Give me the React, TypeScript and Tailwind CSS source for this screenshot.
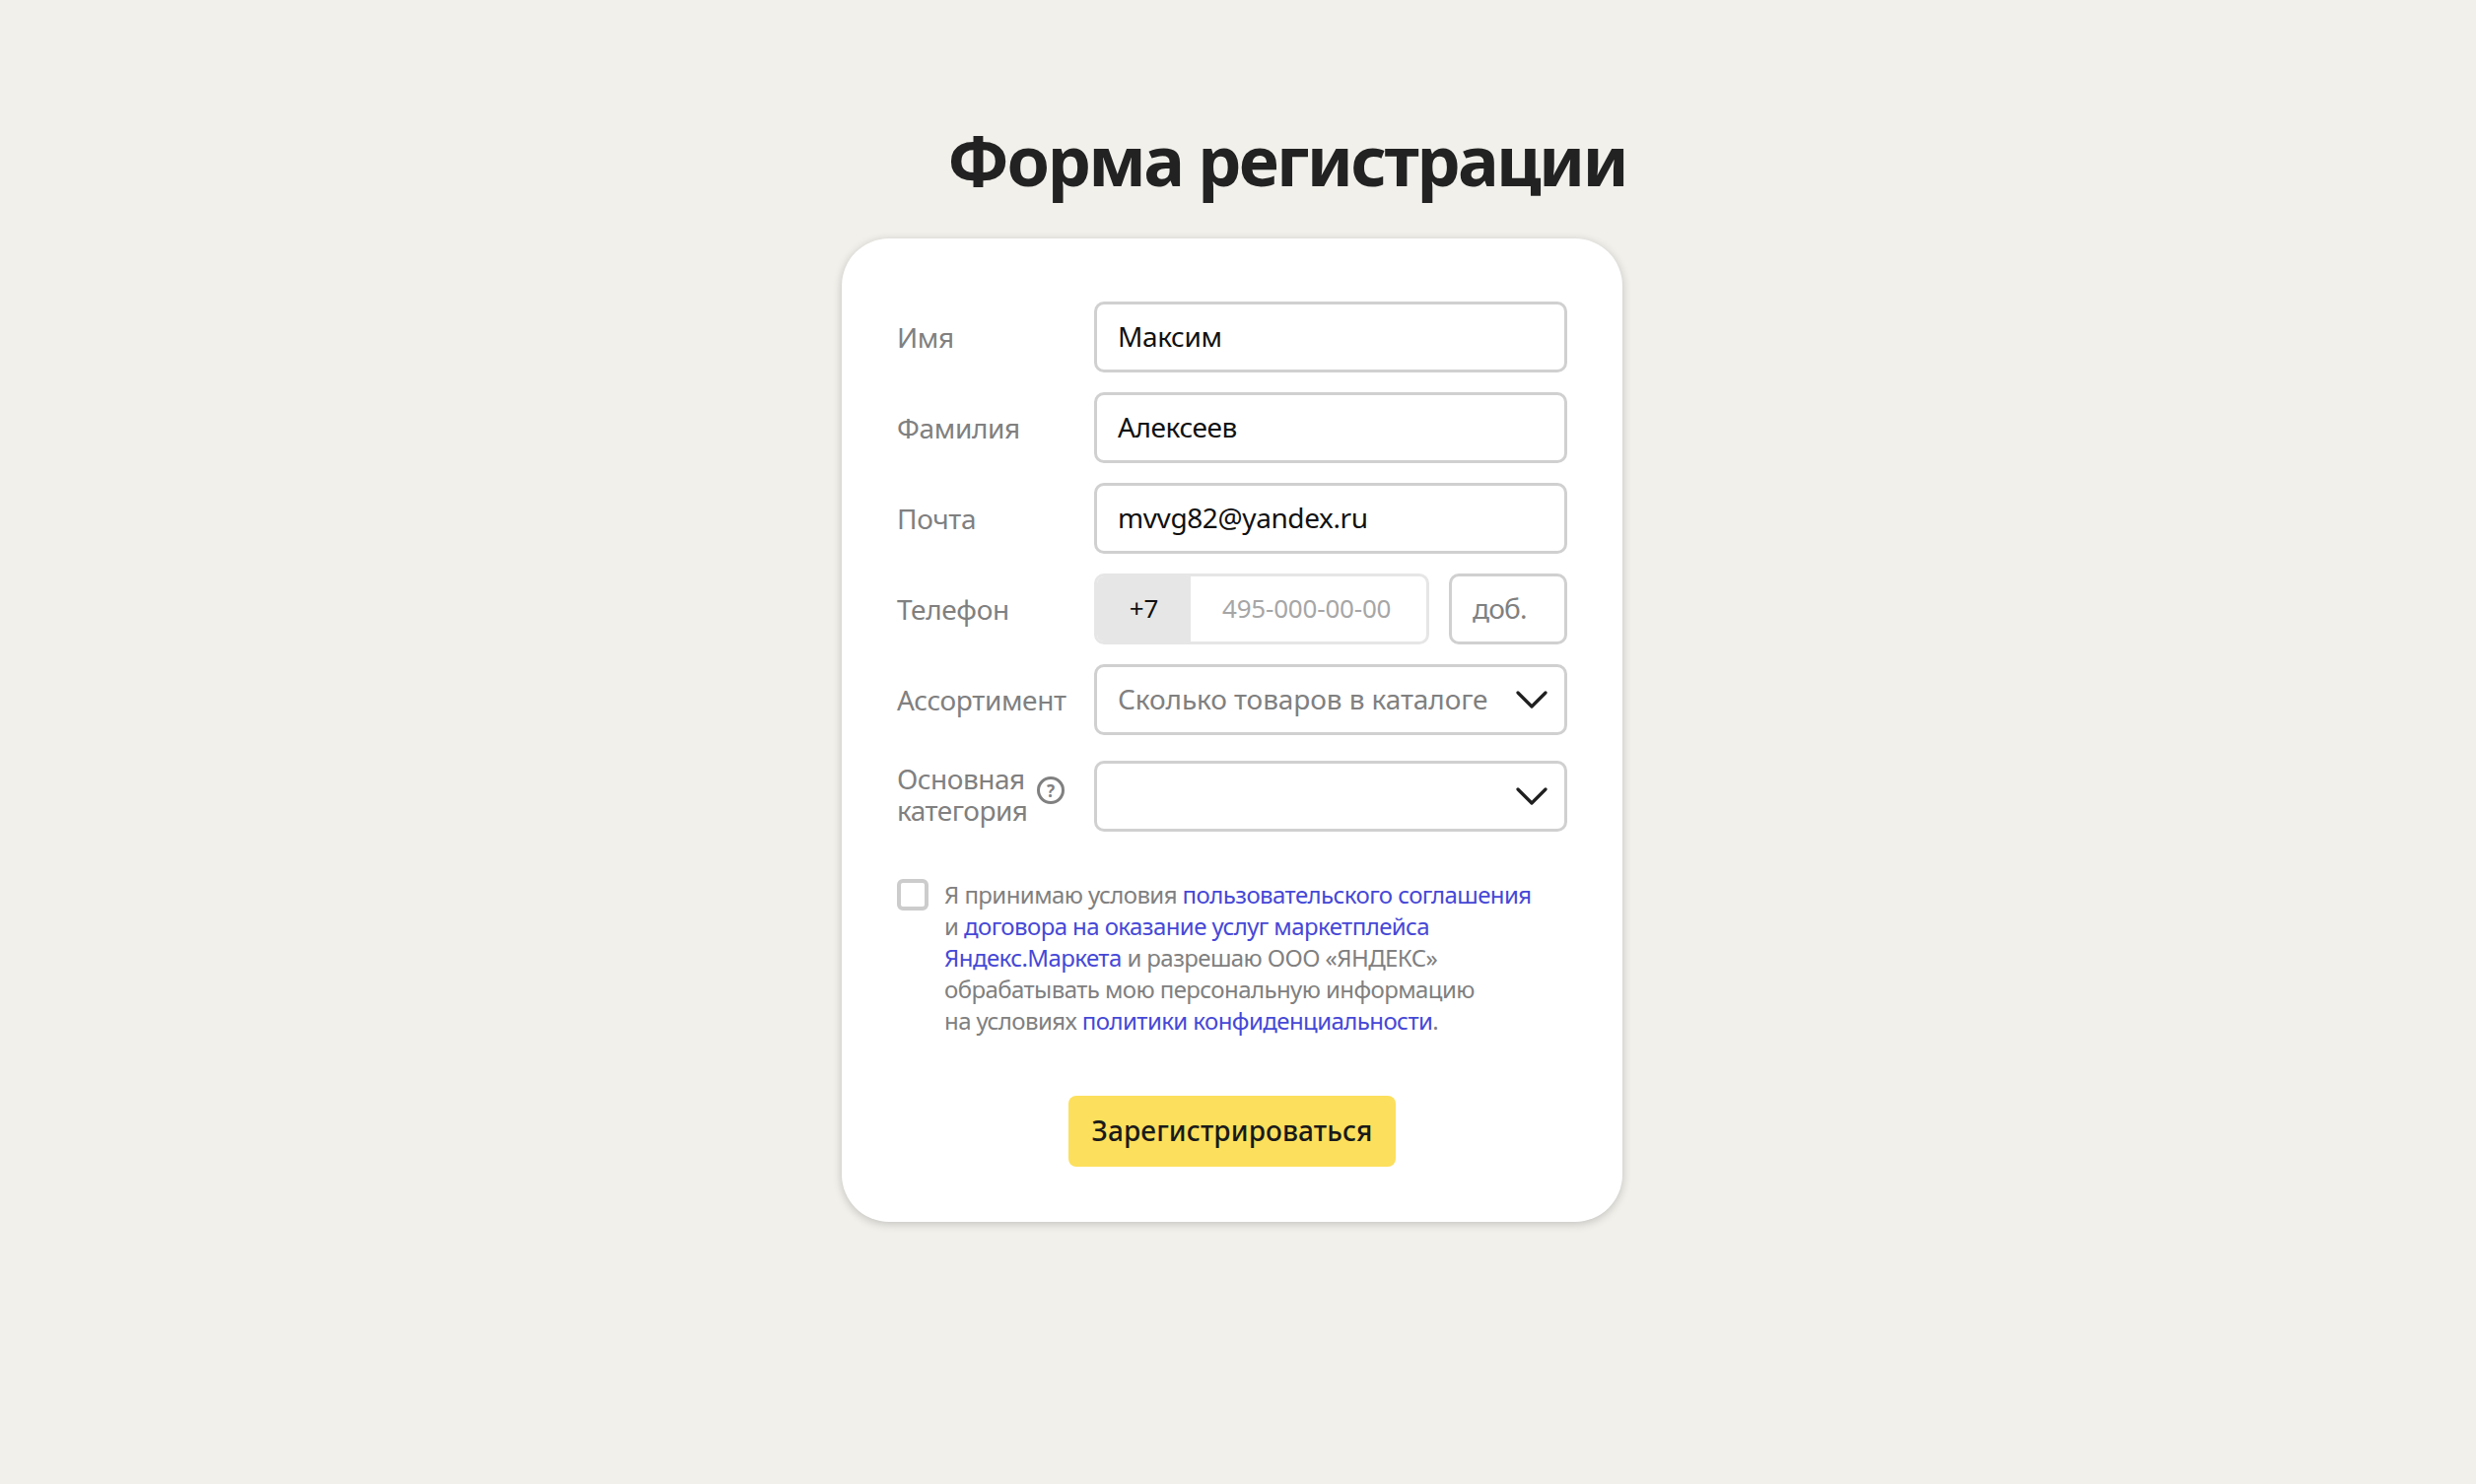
const sans = "font-['Noto_Sans','Liberation_Sans',sans-serif]";

function Label({ children }: { children: React.ReactNode }) {
  return <div className="w-[200px] shrink-0 text-[28px] leading-[32px] tracking-[-0.35px] text-[#808080]">{children}</div>;
}

function Chevron() {
  return (
    <svg width="32" height="18" viewBox="0 0 32 18" fill="none" className="shrink-0">
      <path d="M2 2 L16 16 L30 2" stroke="#1f1f1f" strokeWidth="3.2" strokeLinecap="round" strokeLinejoin="round" />
    </svg>
  );
}

function Input({ value }: { value: string }) {
  return (
    <div className="flex h-[72px] w-[480px] items-center rounded-[10px] border-[3px] border-[#d0d0d0] pb-[2px] pl-[21px] text-[28px] tracking-[-0.4px] text-[#111111]">
      {value}
    </div>
  );
}

function Select({ placeholder }: { placeholder?: string }) {
  return (
    <div className="flex h-[72px] w-[480px] items-center justify-between rounded-[10px] border-[3px] border-[#d0d0d0] pl-[21px] pr-[17px] text-[28px] text-[#808080]">
      <span className="-mt-[2px] tracking-[-0.1px]">{placeholder}</span>
      <Chevron />
    </div>
  );
}

function Row({ label, children }: { label: string; children: React.ReactNode }) {
  return (
    <div className="flex items-center">
      <Label>{label}</Label>
      {children}
    </div>
  );
}

function A({ children }: { children: React.ReactNode }) {
  return <a className="text-[#4648d6]">{children}</a>;
}

export default function App() {
  return (
    <div className={`min-h-[1506px] bg-[#f1f0eb] ${sans}`}>
      <div className="mx-auto flex w-[792px] -translate-x-[6px] flex-col">
        <h1 className="mt-[110px] whitespace-nowrap pl-[107px] text-[70px] font-bold leading-[104px] tracking-[-2.6px] text-[#222222]">
          Форма регистрации
        </h1>
        <div className="mt-[28px] flex h-[998px] flex-col rounded-[48px] bg-white pl-[56px] pr-[56px] pt-[64px] shadow-[0_2px_10px_rgba(0,0,0,0.2)]">
          <div className="flex flex-col gap-[20px]">
            <Row label="Имя"><Input value="Максим" /></Row>
            <Row label="Фамилия"><Input value="Алексеев" /></Row>
            <Row label="Почта"><Input value="mvvg82@yandex.ru" /></Row>
            <Row label="Телефон">
              <div className="flex h-[72px] w-[340px] overflow-hidden rounded-[10px] border-[3px] border-[#e6e6e6]">
                <div className="flex w-[95px] items-center justify-center bg-[#e6e6e6] pb-[2px] text-[26px] text-[#111111]">+7</div>
                <div className="flex flex-1 items-center pb-[2px] pl-[32px] text-[26px] tracking-[-0.2px] text-[#a6a6a6]">495-000-00-00</div>
              </div>
              <div className="ml-[20px] flex h-[72px] w-[120px] items-center rounded-[10px] border-[3px] border-[#d0d0d0] pb-[2px] pl-[21px] text-[28px] tracking-[-0.8px] text-[#808080]">
                доб.
              </div>
            </Row>
            <Row label="Ассортимент"><Select placeholder="Сколько товаров в каталоге" /></Row>
          </div>
          <div className="mt-[26px] flex items-center">
            <div className="flex w-[200px] shrink-0 items-center">
              <div className="-mt-[4px] w-[142px] text-[28px] leading-[32px] tracking-[-0.5px] text-[#808080]">Основная категория</div>
              <div className="-mt-[12px] flex h-[28px] w-[28px] items-center justify-center rounded-full border-[3px] border-[#808080] text-[17px] font-bold leading-none text-[#808080]">?</div>
            </div>
            <Select />
          </div>
          <div className="mt-[48px] flex">
            <div className="h-[32px] w-[32px] shrink-0 rounded-[6px] border-[4px] border-[#cccccc]" />
            <p className="ml-[16px] text-[24px] leading-[32px] tracking-[-0.58px] text-[#808080]">
              Я принимаю условия <A>пользовательского соглашения</A><br />
              и <A>договора на оказание услуг маркетплейса</A><br />
              <A>Яндекс.Маркета</A> и разрешаю ООО «ЯНДЕКС»<br />
              обрабатывать мою персональную информацию<br />
              на условиях <A>политики конфиденциальности</A>.
            </p>
          </div>
          <button className="mx-auto mt-[60px] flex h-[72px] w-[332px] items-center justify-center rounded-[8px] bg-[#fcdf5c] pb-[2px] text-[28px] font-medium tracking-[0.1px] text-[#1a1a1a]">
            Зарегистрироваться
          </button>
        </div>
      </div>
    </div>
  );
}
